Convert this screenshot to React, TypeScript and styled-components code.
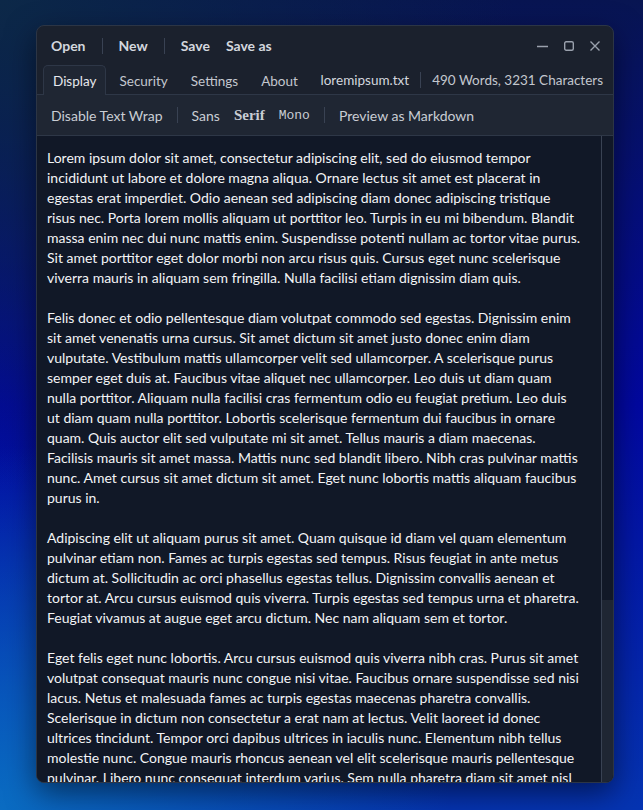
import React from 'react';
import styled, { createGlobalStyle } from 'styled-components';

const GlobalStyle = createGlobalStyle`
  html, body {
    margin: 0;
    padding: 0;
  }
  body {
    font-family: Lato, "Noto Sans", sans-serif;
    -webkit-font-smoothing: antialiased;
  }
`;

const Desktop = styled.div`
  height: 810px;
  box-sizing: border-box;
  padding: 25px 29px 27px 36px;
  background-color: #0414a0;
  background-image:
    radial-gradient(ellipse 70% 45% at 0% 100%, #0a6cc2 0%, rgba(10, 108, 194, 0) 100%),
    radial-gradient(ellipse 80% 60% at 0% 0%, #0c2848 0%, rgba(12, 40, 72, 0) 100%),
    linear-gradient(180deg, #081552 0%, #0208a0 50%, #0534b2 100%);
`;

const Window = styled.div`
  width: 578px;
  height: 758px;
  box-sizing: border-box;
  display: flex;
  flex-direction: column;
  background: #1b212d;
  border: 1px solid #2c3545;
  border-radius: 8px;
  overflow: hidden;
  box-shadow: 0 10px 30px rgba(0, 0, 0, 0.5);
`;

const TitleBar = styled.div`
  height: 39px;
  display: flex;
  align-items: center;
  gap: 16px;
  padding: 0 13px 0 14px;
`;

const MenuButton = styled.span`
  font-size: 14px;
  font-weight: 700;
  color: #d3d7de;
`;

const Divider = styled.span`
  flex-shrink: 0;
  width: 1px;
  height: 16px;
  background: #394253;
`;

const Controls = styled.div`
  margin-left: auto;
  display: flex;
  align-items: center;
  gap: 16px;
`;

const TabBar = styled.div`
  height: 29px;
  display: flex;
  align-items: stretch;
  gap: 3px;
  padding: 0 10px 0 6px;
  border-bottom: 1px solid #2e3747;
`;

const Tab = styled.div<{ $active?: boolean }>`
  display: flex;
  align-items: center;
  padding: 0 9px;
  font-size: 13.5px;
  white-space: nowrap;
  color: ${({ $active }) => ($active ? '#e6e8ec' : '#c3c7cf')};
  background: ${({ $active }) => ($active ? '#1f2633' : 'transparent')};
  border: 1px solid ${({ $active }) => ($active ? '#2e3747' : 'transparent')};
  border-bottom: none;
  border-radius: 5px 5px 0 0;
  margin-bottom: -1px;
`;

const FileInfo = styled.div`
  margin-left: auto;
  display: flex;
  align-items: center;
  gap: 11px;
  font-size: 13.5px;
  white-space: nowrap;
  flex-shrink: 0;
`;

const FileName = styled.span`
  color: #d3d7de;
`;

const Counts = styled.span`
  color: #c3c7cf;
`;

const Toolbar = styled.div`
  height: 40px;
  display: flex;
  align-items: center;
  gap: 14px;
  padding: 0 14px;
  background: #1f2633;
  border-bottom: 1px solid #2e3747;
`;

const ToolButton = styled.span<{ $font?: 'sans' | 'serif' | 'mono' }>`
  color: #c9cdd4;
  white-space: nowrap;
  font-size: ${({ $font }) => ($font === 'serif' ? '15px' : $font === 'mono' ? '13px' : '14px')};
  font-weight: ${({ $font }) => ($font === 'serif' ? 700 : 400)};
  font-family: ${({ $font }) =>
    $font === 'serif'
      ? '"Liberation Serif", "DejaVu Serif", serif'
      : $font === 'mono'
      ? '"Liberation Mono", "DejaVu Sans Mono", monospace'
      : 'Lato, "Noto Sans", sans-serif'};
`;

const Content = styled.div`
  flex: 1;
  min-height: 0;
  display: flex;
  background: #111827;
`;

const TextArea = styled.div`
  flex: 1;
  overflow: hidden;
  padding: 12px 10px 0 10px;
  color: #f3f4f6;
  font-size: 14px;
  line-height: 20px;
`;

const Paragraph = styled.p`
  margin: 0 0 20px;
`;

const Line = styled.span`
  display: block;
  white-space: nowrap;
`;

const ScrollTrack = styled.div`
  width: 11px;
  display: flex;
  flex-direction: column;
  justify-content: flex-end;
  border-left: 1px solid #394253;
`;

const ScrollThumb = styled.div`
  height: 182px;
  background: #1f2633;
`;

const MinimizeIcon = () => (
  <svg width="11" height="12" viewBox="0 0 11 12">
    <path d="M0 6.5h11" stroke="#9aa1ad" strokeWidth="1.4" />
  </svg>
);

const MaximizeIcon = () => (
  <svg width="10" height="10" viewBox="0 0 10 10">
    <rect x="0.7" y="0.7" width="8.6" height="8.6" rx="1.5" fill="none" stroke="#9aa1ad" strokeWidth="1.4" />
  </svg>
);

const CloseIcon = () => (
  <svg width="10" height="10" viewBox="0 0 10 10">
    <path d="M0.5 0.5l9 9M9.5 0.5l-9 9" stroke="#9aa1ad" strokeWidth="1.4" />
  </svg>
);

const paragraphs: string[][] = [
  [
    'Lorem ipsum dolor sit amet, consectetur adipiscing elit, sed do eiusmod tempor',
    'incididunt ut labore et dolore magna aliqua. Ornare lectus sit amet est placerat in',
    'egestas erat imperdiet. Odio aenean sed adipiscing diam donec adipiscing tristique',
    'risus nec. Porta lorem mollis aliquam ut porttitor leo. Turpis in eu mi bibendum. Blandit',
    'massa enim nec dui nunc mattis enim. Suspendisse potenti nullam ac tortor vitae purus.',
    'Sit amet porttitor eget dolor morbi non arcu risus quis. Cursus eget nunc scelerisque',
    'viverra mauris in aliquam sem fringilla. Nulla facilisi etiam dignissim diam quis.',
  ],
  [
    'Felis donec et odio pellentesque diam volutpat commodo sed egestas. Dignissim enim',
    'sit amet venenatis urna cursus. Sit amet dictum sit amet justo donec enim diam',
    'vulputate. Vestibulum mattis ullamcorper velit sed ullamcorper. A scelerisque purus',
    'semper eget duis at. Faucibus vitae aliquet nec ullamcorper. Leo duis ut diam quam',
    'nulla porttitor. Aliquam nulla facilisi cras fermentum odio eu feugiat pretium. Leo duis',
    'ut diam quam nulla porttitor. Lobortis scelerisque fermentum dui faucibus in ornare',
    'quam. Quis auctor elit sed vulputate mi sit amet. Tellus mauris a diam maecenas.',
    'Facilisis mauris sit amet massa. Mattis nunc sed blandit libero. Nibh cras pulvinar mattis',
    'nunc. Amet cursus sit amet dictum sit amet. Eget nunc lobortis mattis aliquam faucibus',
    'purus in.',
  ],
  [
    'Adipiscing elit ut aliquam purus sit amet. Quam quisque id diam vel quam elementum',
    'pulvinar etiam non. Fames ac turpis egestas sed tempus. Risus feugiat in ante metus',
    'dictum at. Sollicitudin ac orci phasellus egestas tellus. Dignissim convallis aenean et',
    'tortor at. Arcu cursus euismod quis viverra. Turpis egestas sed tempus urna et pharetra.',
    'Feugiat vivamus at augue eget arcu dictum. Nec nam aliquam sem et tortor.',
  ],
  [
    'Eget felis eget nunc lobortis. Arcu cursus euismod quis viverra nibh cras. Purus sit amet',
    'volutpat consequat mauris nunc congue nisi vitae. Faucibus ornare suspendisse sed nisi',
    'lacus. Netus et malesuada fames ac turpis egestas maecenas pharetra convallis.',
    'Scelerisque in dictum non consectetur a erat nam at lectus. Velit laoreet id donec',
    'ultrices tincidunt. Tempor orci dapibus ultrices in iaculis nunc. Elementum nibh tellus',
    'molestie nunc. Congue mauris rhoncus aenean vel elit scelerisque mauris pellentesque',
    'pulvinar. Libero nunc consequat interdum varius. Sem nulla pharetra diam sit amet nisl',
  ],
];

const App = () => {
  return (
    <>
      <GlobalStyle />
      <Desktop>
        <Window>
          {/* Title bar */}
          <TitleBar>
            <MenuButton>Open</MenuButton>
            <Divider />
            <MenuButton>New</MenuButton>
            <Divider />
            <MenuButton>Save</MenuButton>
            <MenuButton>Save as</MenuButton>
            <Controls>
              <MinimizeIcon />
              <MaximizeIcon />
              <CloseIcon />
            </Controls>
          </TitleBar>

          {/* Tabs */}
          <TabBar>
            <Tab $active>Display</Tab>
            <Tab>Security</Tab>
            <Tab>Settings</Tab>
            <Tab>About</Tab>
            <FileInfo>
              <FileName>loremipsum.txt</FileName>
              <Divider />
              <Counts>490 Words, 3231 Characters</Counts>
            </FileInfo>
          </TabBar>

          {/* Display options */}
          <Toolbar>
            <ToolButton>Disable Text Wrap</ToolButton>
            <Divider />
            <ToolButton $font="sans">Sans</ToolButton>
            <ToolButton $font="serif">Serif</ToolButton>
            <ToolButton $font="mono">Mono</ToolButton>
            <Divider />
            <ToolButton>Preview as Markdown</ToolButton>
          </Toolbar>

          {/* Document */}
          <Content>
            <TextArea>
              {paragraphs.map((lines, i) => (
                <Paragraph key={i}>
                  {lines.map((line, j) => (
                    <Line key={j}>{line}</Line>
                  ))}
                </Paragraph>
              ))}
            </TextArea>
            <ScrollTrack>
              <ScrollThumb />
            </ScrollTrack>
          </Content>
        </Window>
      </Desktop>
    </>
  );
};

export default App;
